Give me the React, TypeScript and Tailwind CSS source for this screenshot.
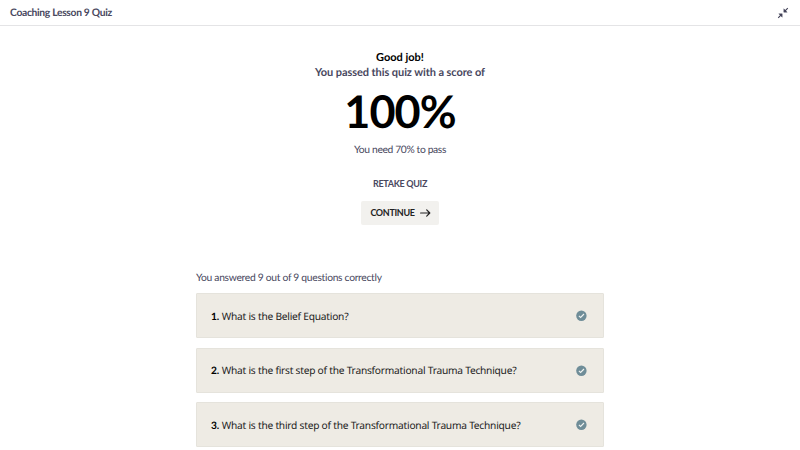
const questions = [
  'What is the Belief Equation?',
  'What is the first step of the Transformational Trauma Technique?',
  'What is the third step of the Transformational Trauma Technique?',
];

function CollapseIcon() {
  return (
    <svg width="12" height="12" viewBox="0 0 12 12" fill="#45445a" stroke="#45445a" strokeWidth="1.1">
      <path d="M6.8 1.8V5.2h3.4zM1.8 6.8H5.2v3.4z" strokeWidth="0.4" />
      <path d="M7.5 4.5L10.8 1.2M4.5 7.5L1.2 10.8" fill="none" />
    </svg>
  );
}

function ArrowIcon() {
  return (
    <svg width="11" height="8" viewBox="0 0 11 8" fill="none" stroke="#222" strokeWidth="1.2" strokeLinecap="round" strokeLinejoin="round">
      <path d="M0.6 4H9.8M6.7 0.9L9.8 4L6.7 7.1" />
    </svg>
  );
}

function CheckIcon() {
  return (
    <svg width="11" height="11" viewBox="0 0 11 11">
      <circle cx="5.4" cy="5.7" r="5.2" fill="#6f8d98" />
      <path d="M2.9 5.9L4.6 7.5L8 4" fill="none" stroke="#f0f3f2" strokeWidth="1.1" />
    </svg>
  );
}

export default function App() {
  return (
    <div className="h-[450px] w-[800px] overflow-hidden bg-white font-['Lato',sans-serif] text-[#494860] [text-rendering:geometricPrecision]">
      <header className="flex h-[26px] items-center justify-between border-b border-[#e4e4e6] pr-[11px] pl-[10px]">
        <h1 className="text-[10.3px] leading-[14px] font-bold tracking-[-0.31px]">Coaching Lesson 9 Quiz</h1>
        <CollapseIcon />
      </header>
      <section className="flex flex-col items-center pt-[24px]">
        <p className="text-[11px] leading-[15px] font-bold text-black">Good job!</p>
        <p className="text-[11px] leading-[15px] font-bold tracking-[-0.07px]">You passed this quiz with a score of</p>
        <p className="mt-[3px] text-[45px] leading-[56px] font-bold tracking-[-0.9px] text-black">100%</p>
        <p className="mt-[4px] text-[10.3px] leading-[14px] tracking-[-0.36px]">You need 70% to pass</p>
        <button className="mt-[20px] text-[9px] leading-[14px] font-bold tracking-[-0.32px]">RETAKE QUIZ</button>
        <button className="mt-[10px] flex h-[24px] w-[78px] items-center justify-center gap-[5px] rounded-[2px] bg-[#f2f1ee] pl-px text-[9px] font-bold tracking-[-0.33px] text-[#222]">
          CONTINUE
          <ArrowIcon />
        </button>
      </section>
      <section className="mx-auto mt-[45px] w-[408px]">
        <p className="pt-px text-[10.3px] leading-[14px] tracking-[-0.3px]">You answered 9 out of 9 questions correctly</p>
        <ol className="mt-[8px] flex flex-col gap-[9.7px]">
          {questions.map((question, index) => (
            <li key={question} className="flex h-[45px] items-center justify-between rounded-[1px] border border-[#e5e3dc] bg-[#eeebe4] pr-[16px] pl-[14px]">
              <p className="pt-px font-['Noto_Sans',sans-serif] text-[10.2px] leading-[14px] tracking-[-0.23px] text-[#222]">
                <span className="mr-[0.5px] font-['Lato',sans-serif] font-bold text-black">{index + 1}.</span> {question}
              </p>
              <CheckIcon />
            </li>
          ))}
        </ol>
      </section>
    </div>
  );
}
